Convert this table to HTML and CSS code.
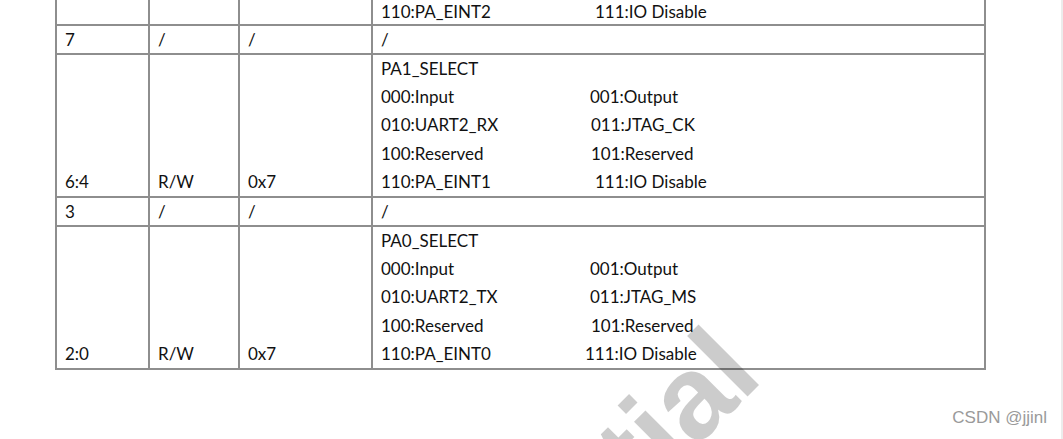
FILE: index.html
```html
<!DOCTYPE html>
<html>
<head>
<meta charset="utf-8">
<link rel="stylesheet" href="styles.css">
</head>
<body>
<div class="page">
  <table class="regs">
    <colgroup>
      <col class="c-bit"><col class="c-rw"><col class="c-def"><col class="c-desc">
    </colgroup>
    <tr class="row-cut">
      <td></td><td></td><td></td>
      <td><div class="pair"><span>110:PA_EINT2</span><span class="s5">111:IO Disable</span></div></td>
    </tr>
    <tr class="row-one">
      <td>7</td><td>/</td><td>/</td><td>/</td>
    </tr>
    <tr class="row-sel">
      <td>6:4</td><td>R/W</td><td>0x7</td>
      <td>
        <div class="line">PA1_SELECT</div>
        <div class="pair"><span>000:Input</span><span>001:Output</span></div>
        <div class="pair"><span>010:UART2_RX</span><span class="s1">011:JTAG_CK</span></div>
        <div class="pair"><span>100:Reserved</span><span class="s1">101:Reserved</span></div>
        <div class="pair"><span>110:PA_EINT1</span><span class="s5">111:IO Disable</span></div>
      </td>
    </tr>
    <tr class="row-one">
      <td>3</td><td>/</td><td>/</td><td>/</td>
    </tr>
    <tr class="row-sel">
      <td>2:0</td><td>R/W</td><td>0x7</td>
      <td>
        <div class="line">PA0_SELECT</div>
        <div class="pair"><span>000:Input</span><span>001:Output</span></div>
        <div class="pair"><span>010:UART2_TX</span><span>011:JTAG_MS</span></div>
        <div class="pair"><span>100:Reserved</span><span class="s1">101:Reserved</span></div>
        <div class="pair"><span>110:PA_EINT0</span><span class="sm5">111:IO Disable</span></div>
      </td>
    </tr>
  </table>
  <div class="watermark">Confidential</div>
  <div class="csdn">CSDN @jjinl</div>
</div>
</body>
</html>
```

FILE: styles.css
```css
html, body {
  margin: 0;
  padding: 0;
  background: #fff;
}
.page {
  position: relative;
  width: 1061px;
  height: 439px;
  overflow: hidden;
  border-right: 2px solid #ececec;
  font-family: Lato, "Liberation Sans", sans-serif;
  font-size: 17px;
  color: #111;
}
.regs {
  margin-left: 55px;
  border-collapse: collapse;
  table-layout: fixed;
  width: 929px;
}
.c-bit { width: 93px; }
.c-rw { width: 90px; }
.c-def { width: 133px; }
.c-desc { width: 613px; }
.regs td {
  border: 2px solid #8e8e8e;
  padding: 0 0 0 8px;
  vertical-align: bottom;
  line-height: 28px;
  white-space: nowrap;
  overflow: hidden;
}
.regs td:last-child { padding-left: 8px; }
.row-cut td {
  border-top: none;
  height: 24px;
  line-height: 24px;
}
.row-cut .pair {
  height: 24px;
}
.row-one td {
  height: 27px;
  line-height: 27px;
}
.row-sel td {
  height: 141px;
}
.row-sel .line, .row-sel .pair {
  height: 28.2px;
}
.pair {
  display: flex;
}
.pair span:first-child {
  width: 209px;
}
.pair .s1 { padding-left: 1px; }
.pair .s5 { padding-left: 5px; }
.pair .sm5 { margin-left: -5px; }
.watermark {
  position: absolute;
  left: 0;
  top: 0;
  width: 780px;
  text-align: right;
  font-family: "Liberation Sans", Arial, sans-serif;
  font-weight: bold;
  font-size: 118px;
  line-height: 120px;
  color: rgba(0, 0, 0, 0.2);
  transform-origin: 780px 101px;
  transform: translate(-15px, 278px) rotate(-45deg);
  pointer-events: none;
  white-space: nowrap;
}
.csdn {
  position: absolute;
  right: 14px;
  bottom: 11px;
  font-family: "Liberation Sans", Arial, sans-serif;
  font-size: 17px;
  color: #9a9a9a;
  text-shadow: 0 0 1px #fff;
}
```
